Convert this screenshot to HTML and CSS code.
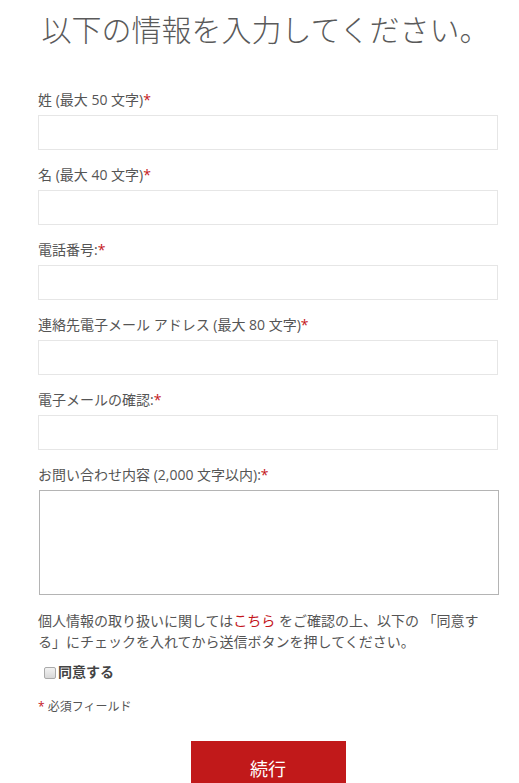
FILE: index.html
```html
<!DOCTYPE html>
<html lang="ja">
<head>
<meta charset="utf-8">
<title>お問い合わせ</title>
<link rel="stylesheet" href="styles.css">
</head>
<body>
  <h1 class="page-title">以下の情報を入力してください。</h1>

  <form class="contact-form">
    <div class="field">
      <label class="field-label" for="last">姓 (最大 50 文字)<span class="req">*</span></label>
      <input class="field-input" id="last" type="text">
    </div>
    <div class="field">
      <label class="field-label" for="first">名 (最大 40 文字)<span class="req">*</span></label>
      <input class="field-input" id="first" type="text">
    </div>
    <div class="field">
      <label class="field-label" for="tel">電話番号:<span class="req">*</span></label>
      <input class="field-input" id="tel" type="text">
    </div>
    <div class="field">
      <label class="field-label" for="mail">連絡先電子メール アドレス (最大 80 文字)<span class="req">*</span></label>
      <input class="field-input" id="mail" type="text">
    </div>
    <div class="field">
      <label class="field-label" for="mail2">電子メールの確認:<span class="req">*</span></label>
      <input class="field-input" id="mail2" type="text">
    </div>
    <div class="field">
      <label class="field-label" for="msg">お問い合わせ内容 (2,000 文字以内):<span class="req">*</span></label>
      <textarea class="field-text" id="msg"></textarea>
    </div>

    <p class="privacy">個人情報の取り扱いに関しては<a class="link" href="#">こちら</a> をご確認の上、以下の 「同意する」にチェックを入れてから送信ボタンを押してください。</p>

    <label class="agree"><input class="agree-box" type="checkbox">同意する</label>

    <p class="required-note"><span class="req">*</span> 必須フィールド</p>

    <div class="actions">
      <button class="submit" type="button">続行</button>
    </div>
  </form>
</body>
</html>
```

FILE: styles.css
```css
html { background: #fff; }

body {
  margin: 0;
  font-family: "Open Sans", "Noto Sans CJK JP", sans-serif;
  color: #555;
}

.page-title {
  margin: 10px 0 44px;
  padding-left: 12px;
  font-family: "Noto Sans CJK JP", sans-serif;
  font-size: 30px;
  font-weight: 300;
  line-height: 36px;
  text-align: center;
  color: #5a5a5a;
}

.contact-form {
  width: 460px;
  margin-left: 38px;
}

.field { margin-bottom: 15px; }

.field-label {
  display: block;
  margin-bottom: 5px;
  font-size: 14px;
  line-height: 20px;
}

.req { color: #c4161c; }

.field-input {
  display: block;
  box-sizing: border-box;
  width: 100%;
  height: 35px;
  margin: 0;
  border: 1px solid #e6e6e6;
  background: #fff;
}

.field-text {
  display: block;
  box-sizing: border-box;
  width: 460px;
  height: 105px;
  margin: 0 0 0 1px;
  border: 1px solid #b4b4b4;
  resize: none;
}

.privacy {
  margin: 0;
  font-size: 14px;
  line-height: 21px;
}

.link {
  color: #c4161c;
  text-decoration: none;
}

.agree {
  display: flex;
  align-items: center;
  margin-top: 10px;
  font-size: 14px;
  font-weight: bold;
  line-height: 20px;
  color: #444;
}

.agree-box {
  appearance: none;
  -webkit-appearance: none;
  box-sizing: border-box;
  width: 12px;
  height: 12px;
  margin: 2px 2px 0 6px;
  border: 1px solid #aaa;
  border-radius: 2px;
  background: linear-gradient(#f2f2f2, #d8d8d8);
}

.required-note {
  margin: 16px 0 0;
  font-size: 12px;
  line-height: 18px;
}

.actions {
  display: flex;
  justify-content: center;
  margin-top: 25px;
}

.submit {
  width: 155px;
  height: 54px;
  border: 0;
  background: #c1191a;
  color: #fff;
  font-family: "Noto Sans CJK JP", sans-serif;
  font-size: 18px;
  padding: 0;
}
```
